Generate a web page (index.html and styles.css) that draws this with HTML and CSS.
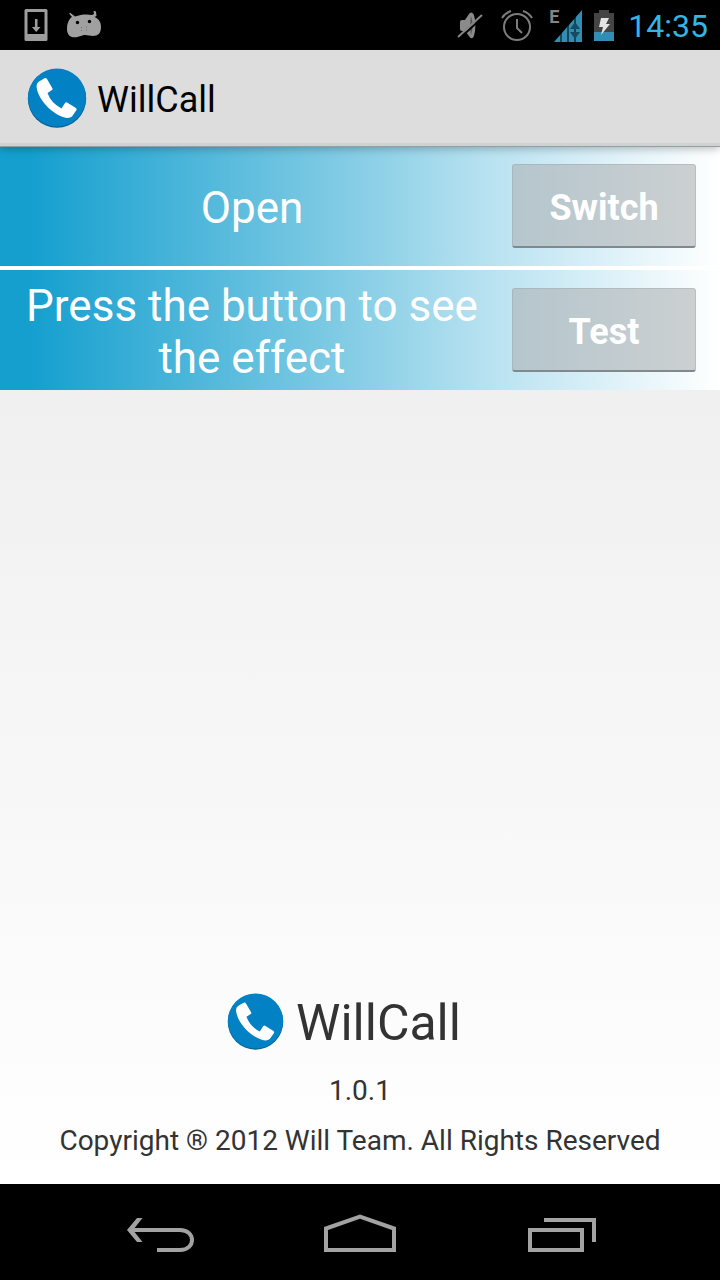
FILE: index.html
```html
<!DOCTYPE html>
<html lang="en">
<head>
<meta charset="utf-8">
<meta name="viewport" content="width=device-width, initial-scale=1">
<title>WillCall</title>
<link rel="stylesheet" href="styles.css">
</head>
<body>
<svg class="defs" aria-hidden="true">
  <symbol id="logo" viewBox="0 0 60 60">
    <circle cx="30" cy="30.500" r="29.200" fill="#05628f"/>
    <circle cx="30" cy="29.500" r="29" fill="#0281c5"/>
    <path d="M18 10 Q19 9.500 20 11 L25.500 20.500 Q26 21.500 25 22 L20.500 25 Q24 35 34.500 40.500 L38 35 Q39 34 40 34.500 L49 40 Q50 41 49.500 42 L45 48.500 Q42 51 36 49 C22 44 10 29 9.500 18 Q9.500 15 12 13.500 Z" fill="#fff"/>
  </symbol>
</svg>
<div class="screen">
  <div class="status">
    <div class="status-group status-left">
      <svg width="24" height="34" viewBox="0 0 24 34" aria-hidden="true">
        <path fill="#9d9d9d" fill-rule="evenodd" d="M2 1H22Q23.500 1 23.500 2.500V31.500Q23.500 33 22 33H2Q.5 33 .5 31.500V2.500Q.5 1 2 1ZM3.500 4V26H20.500V4Z"/>
        <path fill="#9d9d9d" d="M11 11h2.500v8h3l-4.300 5-4.300-5h3z"/>
      </svg>
      <svg width="36" height="28" viewBox="0 0 36 28" aria-hidden="true">
        <path fill="#a0a0a0" d="M1 18C1 11 4 7 6 6L3.500 3Q3 1 4.500 2L9 5.500C15 3 22 3 26 4L28 3 27.500 0Q29-1 30 1L30.500 5 28.500 6C33 8 35 11 35 16C35 24 30 26 23 24.500C19 23.500 17 24 13 25.500C6 28 1 25 1 18Z"/>
        <circle cx="11.500" cy="11.500" r="1.700"/><circle cx="23.500" cy="10.500" r="1.700"/>
        <g opacity=".35"><circle cx="15.500" cy="16.500" r=".6"/><circle cx="20.500" cy="16" r=".6"/><circle cx="15.500" cy="19.500" r=".6"/><circle cx="20.500" cy="19" r=".6"/></g>
      </svg>
    </div>
    <div class="status-group status-right">
      <svg class="mute" width="26" height="30" viewBox="0 0 26 30" aria-hidden="true">
        <path fill="#8b8b8b" d="M3 12Q3 10 5 10H8L12 4Q14 1 16.500 4C19 10 19 21 16.500 27Q14 30 12 26L8 21H5Q3 21 3 19Z"/>
        <path d="M14 6C16 12 16 19 14 25C13 20 13 11 14 6Z" fill="#555"/>
        <path d="M2 29 26 7" stroke="#000" stroke-width="2"/>
        <path d="M1 27 25 5" stroke="#858585" stroke-width="2"/>
      </svg>
      <svg class="alarm" width="32" height="32" viewBox="0 0 32 32" fill="none" stroke="#7d7d7d" stroke-width="2" aria-hidden="true">
        <circle cx="16" cy="18" r="13"/><path d="M16 10V19L21 24M1 9Q4 4 10 2M22 2Q28 4 31 9"/>
      </svg>
      <div class="signal">
        <span class="network">E</span>
        <svg width="30" height="33" viewBox="0 0 30 33" aria-hidden="true">
          <path d="M1 33 29 1V33Z" fill="#318db3"/>
          <path d="M8 22V33M15 15V33M22 7V33" stroke="#000" stroke-width="1"/>
          <path d="M17 20 22 13 27 20ZM17 23H27L22 30Z" fill="#174b60"/>
        </svg>
      </div>
      <svg class="battery" width="20" height="32" viewBox="0 0 20 32" aria-hidden="true">
        <path fill="#444" d="M5 1H15V4H20V32H0V4H5Z"/><path fill="#318db3" d="M0 23H20V32H0Z"/>
        <path fill="#e4e4e4" d="M7 9H15L12 15H16L7 26 9 18H5Z"/>
      </svg>
      <time class="clock">14:35</time>
    </div>
  </div>
  <header class="appbar">
    <svg class="appbar-logo" aria-hidden="true"><use href="#logo"/></svg>
    <h1 class="appbar-title">WillCall</h1>
  </header>
  <main class="content">
    <section class="row">
      <label class="row-text" for="switch">Open</label>
      <button class="button" id="switch" type="button">Switch</button>
    </section>
    <section class="row">
      <label class="row-text" for="test">Press the button to see the effect</label>
      <button class="button" id="test" type="button">Test</button>
    </section>
    <footer class="about">
      <div class="brand">
        <svg class="brand-logo" aria-hidden="true"><use href="#logo"/></svg>
        <span class="brand-name">WillCall</span>
      </div>
      <p class="note">1.0.1</p>
      <p class="note">Copyright ® 2012 Will Team. All Rights Reserved</p>
    </footer>
  </main>
  <nav class="navbar">
    <button class="nav-button" type="button" aria-label="Back">
      <svg width="72" height="40" viewBox="0 0 72 40" fill="none" stroke="#a2a2a2" stroke-width="4"><path d="M7 16H58C74 16 74 36 58 36H35"/><path stroke="none" fill="#a2a2a2" d="M15 4H20.500L11 16 20.500 28H15L5 16Z"/></svg>
    </button>
    <button class="nav-button" type="button" aria-label="Home">
      <svg width="72" height="40" viewBox="0 0 72 40" fill="none" stroke="#a2a2a2" stroke-width="4"><path d="M2 14.500V36H70V14.500L36 2.500Z"/></svg>
    </button>
    <button class="nav-button" type="button" aria-label="Recent apps">
      <svg width="72" height="40" viewBox="0 0 72 40" fill="none" stroke="#a2a2a2" stroke-width="4"><path d="M4 16H56V36H4ZM18 6H68V28"/></svg>
    </button>
  </nav>
</div>
</body>
</html>
```
FILE: styles.css
```css
* { box-sizing: border-box; }
body { margin: 0; font-family: Roboto, "Noto Sans", sans-serif; color: #333; }
.defs { position: absolute; width: 0; height: 0; }
.screen { display: flex; flex-direction: column; min-height: 100vh; }
.screen svg { display: block; flex: none; }

.status { display: flex; justify-content: space-between; align-items: center; height: 50px; padding: 0 12px 0 24px; background: #000; }
.status-group { display: flex; align-items: center; }
.status-left { gap: 18px; }
.mute { margin-right: 18px; }
.alarm { margin-right: 16px; }
.signal { display: flex; align-items: flex-start; margin-right: 11px; }
.network { width: 4px; font-size: 18px; line-height: 16px; font-weight: 700; color: #858585; }
.battery { margin-right: 14px; }
.clock { padding-top: 2px; font-size: 32px; line-height: 48px; color: #33b5e5; }

.appbar { position: relative; display: flex; align-items: center; gap: 10px; height: 97px; margin-bottom: -1px; padding: 0 27px; background: #ddd; border-bottom: 1px solid #8fa0a6; box-shadow: inset 0 -3px #d0d2d2, 0 2px 8px rgba(0, 0, 0, .25); }
.appbar-logo { width: 60px; height: 60px; }
.appbar-title { margin: 0; padding-top: 4px; font-size: 36px; line-height: 44px; font-weight: 400; color: #000; }

.content { flex: 1; display: flex; flex-direction: column; background: linear-gradient(#ebebeb, #fff); }
.row { display: flex; align-items: center; min-height: 120px; padding-right: 24px; background: linear-gradient(90deg, #149fcf 0, #149fcf 4%, #85cde5 49%, #b6e1f0 67%, #fff 100%); }
.row + .row { border-top: 4px solid #fff; min-height: 124px; background-clip: padding-box; }
.row-text { flex: 1; padding: 4px 8px 0 0; text-align: center; font-size: 44px; line-height: 52px; color: #fff; }
.button { width: 184px; height: 84px; padding: 4px 0 0; border: 1px solid rgba(130, 140, 143, .25); border-bottom: 2px solid #82898c; border-radius: 3px; background: rgba(172, 176, 178, .58); font: 700 36px/44px Roboto, sans-serif; color: #fff; }

.about { margin-top: auto; padding: 0 16px 23px; text-align: center; }
.brand { display: flex; align-items: center; justify-content: center; gap: 12px; padding-right: 32px; margin-bottom: 18px; }
.brand-logo { width: 57px; height: 57px; }
.brand-name { padding-top: 4px; font-size: 50px; line-height: 60px; }
.note { margin: 0 0 10px; font-size: 28px; line-height: 40px; }
.note:last-child { margin-bottom: 0; }

.navbar { display: flex; justify-content: center; gap: 32px; height: 96px; background: #000; }
.nav-button { display: flex; align-items: center; justify-content: center; width: 170px; padding: 4px 0 0; border: 0; background: none; }
```
